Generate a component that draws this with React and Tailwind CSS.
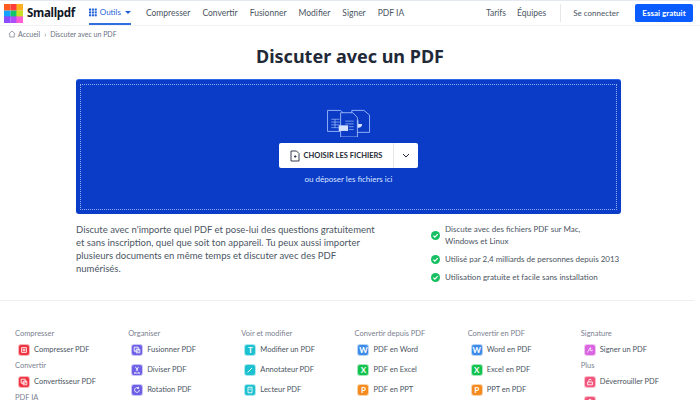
import React from "react";

const FONT = "font-['Lato','Noto_Sans',sans-serif]";

function Logo() {
  return (
    <svg width="19" height="19" viewBox="0 0 23 23" className="shrink-0">
      <rect x="0" y="0" width="8" height="8" fill="#ff5a1f" />
      <rect x="8" y="0" width="8" height="8" fill="#ff3d3d" />
      <rect x="15" y="0" width="8" height="8" fill="#ffb020" />
      <rect x="0" y="8" width="8" height="8" fill="#14a3ff" />
      <rect x="8" y="8" width="8" height="8" fill="#12c46b" />
      <rect x="15" y="8" width="8" height="8" fill="#c8e021" />
      <rect x="0" y="15" width="8" height="8" fill="#8a4dff" />
      <rect x="8" y="15" width="8" height="8" fill="#b04dff" />
      <rect x="15" y="15" width="8" height="8" fill="#ff5ed2" />
    </svg>
  );
}

function GridIcon() {
  return (
    <svg width="9" height="9" viewBox="0 0 10 10" fill="#1f5fd8">
      {[0, 3.6, 7.2].map((y) =>
        [0, 3.6, 7.2].map((x) => <rect key={`${x}-${y}`} x={x} y={y} width="2.6" height="2.6" />)
      )}
    </svg>
  );
}

function HomeIcon() {
  return (
    <svg width="8" height="8" viewBox="0 0 16 16" fill="none" stroke="#6b7280" strokeWidth="1.3">
      <path d="M1.5 8 8 2l6.5 6M3.5 7v7h9V7" strokeLinejoin="round" />
    </svg>
  );
}

function FilesIllustration() {
  return (
    <svg width="46" height="28" viewBox="0 0 48 30" fill="#0b3bc4" stroke="#a9c4ff" strokeWidth="0.9">
      <path d="M1 1.5h14l4 4V24H1z" />
      <path d="M5 11h9M5 14h9M5 17h9M5 20h9M9 11v9" strokeWidth="0.7" />
      <path d="M27 1.5h13l6 5V25H27z" />
      <path d="M38 16a4 4 0 1 1-4-4v4z" fill="#d5e2ff" stroke="none" />
      <path d="M15 4h13l5 5v21H15z" />
      <path d="M20 13h9M20 16h9M24 19h5M24 22h5" strokeWidth="0.7" />
      <rect x="13" y="17.5" width="10" height="6" fill="#d5e2ff" stroke="none" />
    </svg>
  );
}

function FileAddIcon() {
  return (
    <svg width="10" height="12" viewBox="0 0 10 12" fill="none" stroke="#374151" strokeWidth="1">
      <path d="M1 1h5.5L9 3.5V11H1z" strokeLinejoin="round" />
      <path d="M4 6.5h2.5M5.2 5.2v2.6" />
    </svg>
  );
}

function Check() {
  return (
    <svg width="9" height="9" viewBox="0 0 10 10" className="shrink-0">
      <circle cx="5" cy="5" r="5" fill="#16c060" />
      <path d="M2.6 5.1 4.3 6.8 7.5 3.5" fill="none" stroke="#fff" strokeWidth="1.3" />
    </svg>
  );
}

function ToolIcon({ bg, ring, glyph }) {
  return (
    <span
      className={`w-[10px] h-[10px] rounded-[2px] flex items-center justify-center shrink-0 text-[8px] leading-none font-bold text-white ${bg} ${ring}`}
    >
      {glyph}
    </span>
  );
}

function Shape({ d }) {
  return (
    <svg width="8" height="8" viewBox="0 0 10 10" fill="none" stroke="#fff" strokeWidth="1.1">
      <path d={d} />
    </svg>
  );
}

const RED = { bg: "bg-[#ef3340]", ring: "ring-1 ring-[#fbb4b9]" };
const PURPLE = { bg: "bg-[#6d5fe6]", ring: "ring-1 ring-[#c9c3f6]" };
const TEAL = { bg: "bg-[#1cc0cf]", ring: "ring-1 ring-[#a9e8ee]" };
const BLUE = { bg: "bg-[#3d8be8]", ring: "ring-1 ring-[#b7d4f6]" };
const GREEN = { bg: "bg-[#12c24e]", ring: "ring-1 ring-[#a6e8bb]" };
const ORANGE = { bg: "bg-[#f58a1f]", ring: "ring-1 ring-[#fbd3aa]" };
const PINK = { bg: "bg-[#d966e0]", ring: "ring-1 ring-[#f0c4f2]" };
const ROSE = { bg: "bg-[#f2557a]", ring: "ring-1 ring-[#fabccb]" };

function Tool({ label, tone, glyph }) {
  return (
    <div className="h-[20px] flex items-center gap-[5px] pl-[4px] text-[7.5px] text-[#4b5563]">
      <ToolIcon {...tone} glyph={glyph} />
      <span>{label}</span>
    </div>
  );
}

function Heading({ children }) {
  return <div className="h-[12px] leading-[12px] text-[7.5px] text-[#7b8190]">{children}</div>;
}

const BOX = <Shape d="M2 2h6v6H2zM4 4h2v2H4z" />;
const PAGES = <Shape d="M1.5 1.5h5v5h-5zM4 4h4.5v4.5H4z" />;
const CUT = <Shape d="M3 1l3 5M7 1 4 6M3 8a1 1 0 1 0 .01 0M7 8a1 1 0 1 0 .01 0" />;
const ROTATE = <Shape d="M8 5a3 3 0 1 1-1-2.3M7 1v2H5" />;
const PEN = <Shape d="M2 8 7.5 2.5" />;
const DOC = <Shape d="M2.5 1.5h5v7h-5zM4 4h2" />;
const SIGN = <Shape d="M1.5 8c2-1 2.5-5 4-6 1 1-1 4 1 4l2-1" />;
const LOCK = <Shape d="M2 5h6v3.5H2zM3.5 5V3a1.5 1.5 0 0 1 3 0" />;

export default function App() {
  return (
    <div className={`${FONT} w-[700px] h-[400px] overflow-hidden bg-white text-[#263147]`}>
      {/* top nav */}
      <header className="h-[26px] border-t border-[#e4e9f2] border-b border-b-[#f0f1f4] flex items-center pl-[4px] pr-[7px]">
        <Logo />
        <span className="ml-[4px] text-[11.5px] font-bold text-[#111827] font-['Noto_Sans'] tracking-[-0.3px]">Smallpdf</span>
        <div className="ml-[14px] h-full w-[42px] flex items-center justify-center gap-[3px] border-b-2 border-[#2f6fe0] text-[8px] text-[#1f5fd8]">
          <GridIcon />
          <span>Outils</span>
          <span className="w-0 h-0 ml-[1px] border-x-[3px] border-x-transparent border-t-[3px] border-t-[#1f5fd8]" />
        </div>
        <nav className="ml-[15px] flex gap-[12px] text-[8.5px] text-[#4b5563]">
          <span>Compresser</span>
          <span>Convertir</span>
          <span>Fusionner</span>
          <span>Modifier</span>
          <span>Signer</span>
          <span>PDF IA</span>
        </nav>
        <div className="ml-auto flex items-center text-[8.5px] text-[#4b5563]">
          <span>Tarifs</span>
          <span className="ml-[11px]">Équipes</span>
          <span className="ml-[14px] h-[18px] border-l border-[#e5e7eb]" />
          <span className="ml-[12px] text-[8px]">Se connecter</span>
          <button className="ml-[16px] w-[58px] h-[18px] bg-[#0a5cff] rounded-[2px] text-white text-[8px] font-bold">
            Essai gratuit
          </button>
        </div>
      </header>

      {/* breadcrumb */}
      <div className="h-[16px] pl-[8px] flex items-center gap-[2px] text-[7px] text-[#6b7280]">
        <HomeIcon />
        <span>Accueil</span>
        <span className="mx-[2px]">›</span>
        <span>Discuter avec un PDF</span>
      </div>

      <h1 className="h-[28px] leading-[28px] text-center text-[18px] font-bold text-[#1f2937] font-['Noto_Sans']">
        Discuter avec un PDF
      </h1>

      {/* dropzone */}
      <div className="ml-[76px] w-[545px] mt-[9px] h-[135px] rounded-[3px] bg-[#0a3cc8] border-t border-[#2f68e6] p-[4px]">
        <div className="h-full border border-dotted border-[#8fb0f5] flex flex-col items-center pt-[24px]">
          <FilesIllustration />
          <div className="mt-[6px] w-[139px] h-[25px] bg-white rounded-[2px] flex items-center">
            <div className="flex-1 flex items-center justify-center gap-[4px] text-[7.5px] font-bold text-[#1f2937]">
              <FileAddIcon />
              <span>CHOISIR LES FICHIERS</span>
            </div>
            <div className="w-[25px] h-full border-l border-[#e5e7eb] flex items-center justify-center">
              <svg width="8" height="5" viewBox="0 0 8 5" fill="none" stroke="#1f2937" strokeWidth="1">
                <path d="M1 1l3 3 3-3" />
              </svg>
            </div>
          </div>
          <p className="mt-[5px] text-[8px] text-[#dbe6ff]">ou déposer les fichiers ici</p>
        </div>
      </div>

      {/* description */}
      <div className="ml-[76px] w-[545px] mt-[9px] flex justify-between h-[77px]">
        <p className="w-[300px] text-[9.5px] leading-[13px] text-[#4b5563]">
          Discute avec n'importe quel PDF et pose-lui des questions gratuitement et sans inscription, quel que soit
          ton appareil. Tu peux aussi importer plusieurs documents en même temps et discuter avec des PDF numérisés.
        </p>
        <ul className="w-[190px] text-[8px] leading-[12px] text-[#4b5563]">
          <li className="flex items-center gap-[5px]">
            <Check />
            <span className="w-[165px]">Discute avec des fichiers PDF sur Mac, Windows et Linux</span>
          </li>
          <li className="mt-[6px] flex items-center gap-[5px]">
            <Check />
            <span>Utilisé par 2,4 milliards de personnes depuis 2013</span>
          </li>
          <li className="mt-[6px] flex items-center gap-[5px]">
            <Check />
            <span>Utilisation gratuite et facile sans installation</span>
          </li>
        </ul>
      </div>

      {/* tools footer */}
      <div className="border-t border-[#eceef2] pt-[27px] pl-[15px] grid grid-cols-6 w-[694px]">
        <div>
          <Heading>Compresser</Heading>
          <Tool label="Compresser PDF" tone={RED} glyph={BOX} />
          <Heading>Convertir</Heading>
          <Tool label="Convertisseur PDF" tone={RED} glyph={PAGES} />
          <Heading>PDF IA</Heading>
        </div>
        <div>
          <Heading>Organiser</Heading>
          <Tool label="Fusionner PDF" tone={PURPLE} glyph={PAGES} />
          <Tool label="Diviser PDF" tone={PURPLE} glyph={CUT} />
          <Tool label="Rotation PDF" tone={PURPLE} glyph={ROTATE} />
        </div>
        <div>
          <Heading>Voir et modifier</Heading>
          <Tool label="Modifier un PDF" tone={TEAL} glyph="T" />
          <Tool label="Annotateur PDF" tone={TEAL} glyph={PEN} />
          <Tool label="Lecteur PDF" tone={TEAL} glyph={DOC} />
        </div>
        <div>
          <Heading>Convertir depuis PDF</Heading>
          <Tool label="PDF en Word" tone={BLUE} glyph="W" />
          <Tool label="PDF en Excel" tone={GREEN} glyph="X" />
          <Tool label="PDF en PPT" tone={ORANGE} glyph="P" />
        </div>
        <div>
          <Heading>Convertir en PDF</Heading>
          <Tool label="Word en PDF" tone={BLUE} glyph="W" />
          <Tool label="Excel en PDF" tone={GREEN} glyph="X" />
          <Tool label="PPT en PDF" tone={ORANGE} glyph="P" />
        </div>
        <div>
          <Heading>Signature</Heading>
          <Tool label="Signer un PDF" tone={PINK} glyph={SIGN} />
          <Heading>Plus</Heading>
          <Tool label="Déverrouiller PDF" tone={ROSE} glyph={LOCK} />
          <Tool label="" tone={ROSE} glyph={LOCK} />
        </div>
      </div>
    </div>
  );
}
